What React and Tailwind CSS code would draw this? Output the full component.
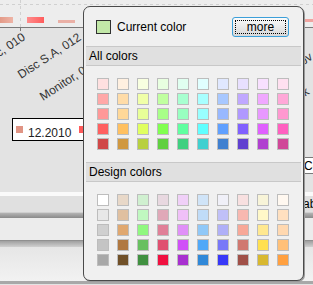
import React from "react";

const ALL = [
  ["#ffe0e0", "#fff0e0", "#f8ffe0", "#e8ffe0", "#e0fff0", "#e0ffff", "#e0e8ff", "#e8e0ff", "#f8e0ff", "#ffe0f0"],
  ["#ffa8a8", "#ffdca8", "#f0ffa8", "#c0ffa0", "#a8ffd0", "#a8ffff", "#a8c8ff", "#c0a8ff", "#f0a8ff", "#ffa8d8"],
  ["#ff9898", "#ffd898", "#e8ff98", "#a8ff88", "#98ffc0", "#98ffff", "#98b8ff", "#b098ff", "#e898ff", "#ff98d0"],
  ["#ff6060", "#ffc060", "#e0ff60", "#80ff50", "#60ffa0", "#60ffff", "#60a0ff", "#8060ff", "#e060ff", "#ff60c0"],
  ["#d04848", "#d09840", "#b8d040", "#60d040", "#40d080", "#40d0d0", "#4080d0", "#6040d0", "#b040d0", "#d04898"],
];

const DESIGN = [
  ["#ffffff", "#e8d8c8", "#d0f0d0", "#e8d8e0", "#f0d0f8", "#d0e4f8", "#f0f0f8", "#f8e0e0", "#f8f4d8", "#fff8f0"],
  ["#e8e8e8", "#e0c0a0", "#c0f8c0", "#e0a8b8", "#f0c0f8", "#c0dcf8", "#c0c0f8", "#f8b8b0", "#fff8c8", "#ffe0c0"],
  ["#d0d0d0", "#e0a870", "#90f880", "#e08098", "#e090f8", "#90c8f8", "#b0b0f8", "#f8a898", "#ffe890", "#ffd8b0"],
  ["#c4c4c4", "#b07840", "#68c060", "#e05070", "#d050f8", "#50a8f8", "#7878f8", "#d07870", "#ffe050", "#ffc078"],
  ["#a8a8a8", "#705028", "#409040", "#f01040", "#a830d0", "#3088d8", "#3838f8", "#a05048", "#d8b830", "#ffa040"],
];

function Grid({ rows }) {
  return (
    <div className="ml-[13px] grid grid-cols-[repeat(10,12px)] gap-x-[8px] gap-y-[3px]">
      {rows.flat().map((c, i) => (
        <div key={i} className="w-[12px] h-[12px] border border-[#bdbdbd]" style={{ background: c }} />
      ))}
    </div>
  );
}

function Band({ children }) {
  return (
    <div className="mx-[2px] h-[20px] border-y border-[#c8c8c8] bg-[#e0e0e0] pl-[3px] flex items-center leading-none">
      {children}
    </div>
  );
}

export default function App() {
  return (
    <div className="relative w-[313px] h-[285px] overflow-hidden bg-[#e3e3e3] text-[12px] text-black font-['Liberation_Sans',Arial,sans-serif]">
      {/* background chart */}
      <svg width="313" height="192" className="block" fontFamily="Liberation Sans, Arial, sans-serif">
        <defs>
          <linearGradient id="b1" x1="0" x2="1">
            <stop offset="0" stopColor="#e39a88" />
            <stop offset="1" stopColor="#eeb4a6" />
          </linearGradient>
          <linearGradient id="b2" x1="0" x2="1">
            <stop offset="0" stopColor="#ff8c8c" />
            <stop offset="1" stopColor="#ff5c5c" />
          </linearGradient>
        </defs>
        <rect x="0" y="0" width="313" height="27" fill="#ededed" />
        <line x1="0" y1="4.5" x2="313" y2="4.5" stroke="#d0d0d0" strokeDasharray="3 3" />
        <line x1="20.5" y1="0" x2="20.5" y2="27" stroke="#d0d0d0" strokeDasharray="3 3" />
        <rect x="0" y="17" width="13" height="6" fill="url(#b1)" />
        <rect x="27" y="17" width="17" height="6" fill="url(#b2)" />
        <rect x="58" y="20" width="17" height="3" fill="#eab0a6" />
        <rect x="300" y="19" width="13" height="3" fill="#f0a4a0" />
        <line x1="0" y1="27.5" x2="313" y2="27.5" stroke="#7a7a7a" />
        <line x1="20.5" y1="27" x2="20.5" y2="31" stroke="#7a7a7a" />
        <text x="26" y="39" textAnchor="end" fontSize="12" fill="#333" transform="rotate(-34 26 39)">Dell Inc, 010</text>
        <text x="21" y="79" fontSize="12" fill="#333" transform="rotate(-33 21 79)">Disc S.A, 012</text>
        <text x="43" y="101" fontSize="12" fill="#333" transform="rotate(-33 43 101)">Monitor, 011</text>
        <text x="296" y="70" fontSize="12" fill="#333" transform="rotate(-33 296 70)">Sbv</text>
        <text x="300" y="100" fontSize="12" fill="#333" transform="rotate(-33 300 100)">ck</text>
        <rect x="12.5" y="118.5" width="110" height="22" fill="#ffffff" stroke="#000" />
        <rect x="16" y="126" width="7" height="7" fill="#e09484" />
        <text x="28" y="137" fontSize="12" fill="#222">12.2010</text>
        <rect x="79" y="126" width="7" height="7" fill="#ff5a5a" />
        <rect x="300.5" y="157.5" width="30" height="16" fill="#ffffff" stroke="#7a7a7a" />
        <text x="304" y="170" fontSize="12" fill="#000">Co</text>
      </svg>
      {/* lower bands */}
      <div className="h-[4px] bg-[#fafafa]" />
      <div className="h-[16px] bg-[#e0e0e0] flex justify-end items-center">
        <span className="w-[10px] overflow-hidden whitespace-nowrap leading-none">ab</span>
      </div>
      <div className="h-[1px] bg-[#cfcfcf]" />
      <div className="h-[5px] bg-gradient-to-b from-[#b4b4b4] to-[#8a8a8a]" />
      <div className="h-[22px] bg-[#ececec]" />
      <div className="h-[1px] bg-[#909090]" />
      <div className="h-[6px] bg-gradient-to-b from-[#a0a0a0] to-[#d0d0d0]" />
      <div className="h-[34px] bg-gradient-to-b from-[#e6e6e6] to-[#f2f2f2]" />
      <div className="h-[3px] bg-[#a8a8a8]" />

      {/* popup */}
      <div className="absolute left-[83px] top-[6px] w-[221px] h-[275px] rounded-[7px] border border-[#4a4a4a] bg-[#f0f0f0] shadow-[1px_1px_0_#9a9a9a] flex flex-col">
        <div className="pt-[10px] pl-[12px] pr-[14px] flex items-center justify-between">
          <div className="flex items-center">
            <div className="w-[15px] h-[14px] border border-[#303030] bg-[#c2e8a8]" />
            <span className="ml-[6px] leading-none">Current color</span>
          </div>
          <button className="relative w-[57px] h-[20px] rounded-[3px] border border-[#3b9fd9] bg-gradient-to-b from-[#fbfbfb] to-[#d8d8d8] flex items-center justify-center leading-none">
            <span className="absolute inset-[2px] border border-dotted border-black" />
            more
          </button>
        </div>
        <div className="mt-[9px]">
          <Band>All colors</Band>
        </div>
        <div className="mt-[12px]">
          <Grid rows={ALL} />
        </div>
        <div className="mt-[12px]">
          <Band>Design colors</Band>
        </div>
        <div className="mt-[12px]">
          <Grid rows={DESIGN} />
        </div>
      </div>
    </div>
  );
}
